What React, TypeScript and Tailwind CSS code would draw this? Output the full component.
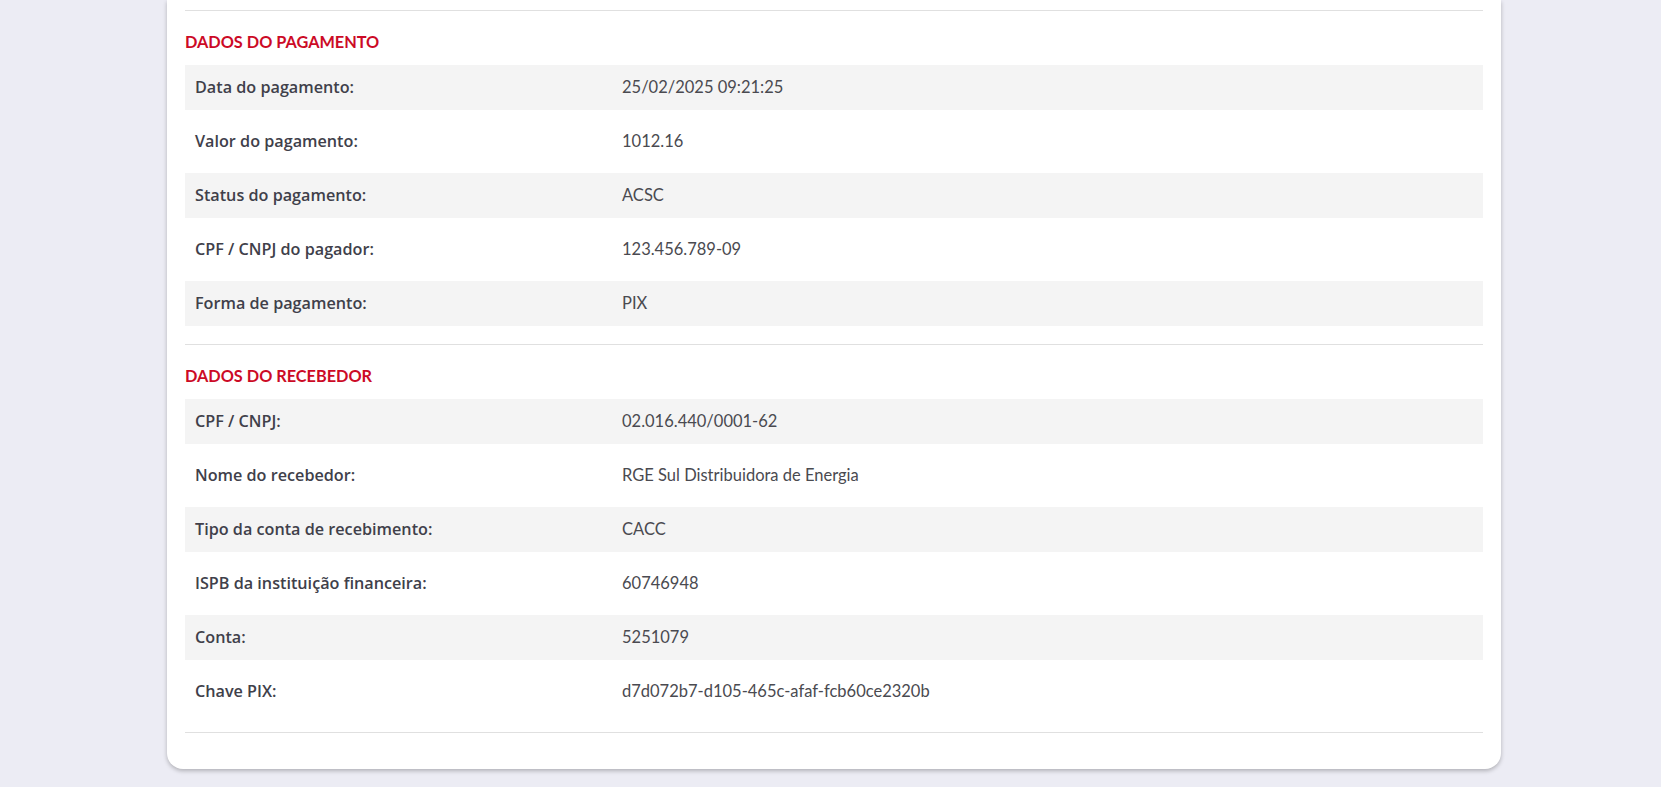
import React from "react";

type Field = { label: string; value: string };

const pagamento: Field[] = [
  { label: "Data do pagamento:", value: "25/02/2025 09:21:25" },
  { label: "Valor do pagamento:", value: "1012.16" },
  { label: "Status do pagamento:", value: "ACSC" },
  { label: "CPF / CNPJ do pagador:", value: "123.456.789-09" },
  { label: "Forma de pagamento:", value: "PIX" },
];

const recebedor: Field[] = [
  { label: "CPF / CNPJ:", value: "02.016.440/0001-62" },
  { label: "Nome do recebedor:", value: "RGE Sul Distribuidora de Energia" },
  { label: "Tipo da conta de recebimento:", value: "CACC" },
  { label: "ISPB da instituição financeira:", value: "60746948" },
  { label: "Conta:", value: "5251079" },
  { label: "Chave PIX:", value: "d7d072b7-d105-465c-afaf-fcb60ce2320b" },
];

function Section({ title, items }: { title: string; items: Field[] }) {
  return (
    <section className="border-t border-[#e0e0e0]">
      <h2 className="pt-[19px] mb-[11px] text-[16.3px] leading-[24px] font-bold uppercase text-[#cc0a26]">{title}</h2>
      <div className="flex flex-col gap-[9px] pb-[18px]">
        {items.map((item, i) => (
          <div
            key={item.label}
            className={`flex h-[45px] items-center pl-[10px] ${i % 2 === 0 ? "bg-[#f4f4f4]" : "bg-white"}`}
          >
            <span className="w-[427px] shrink-0 font-['Open_Sans',sans-serif] text-[16.2px] font-semibold text-[#40404a]">
              {item.label}
            </span>
            <span className="text-[16.5px] text-[#4a4a50]">{item.value}</span>
          </div>
        ))}
      </div>
    </section>
  );
}

export default function App() {
  return (
    <div className="min-h-[787px] bg-[#ececf4] pb-[18px] font-['Lato',sans-serif]">
      <div className="ml-[167px] w-[1334px] rounded-b-2xl bg-white px-[18px] pt-[10px] pb-[36px] shadow-[0_2px_4px_rgba(0,0,0,0.25)]">
        <Section title="Dados do pagamento" items={pagamento} />
        <Section title="Dados do recebedor" items={recebedor} />
        <div className="border-t border-[#e0e0e0]" />
      </div>
    </div>
  );
}
